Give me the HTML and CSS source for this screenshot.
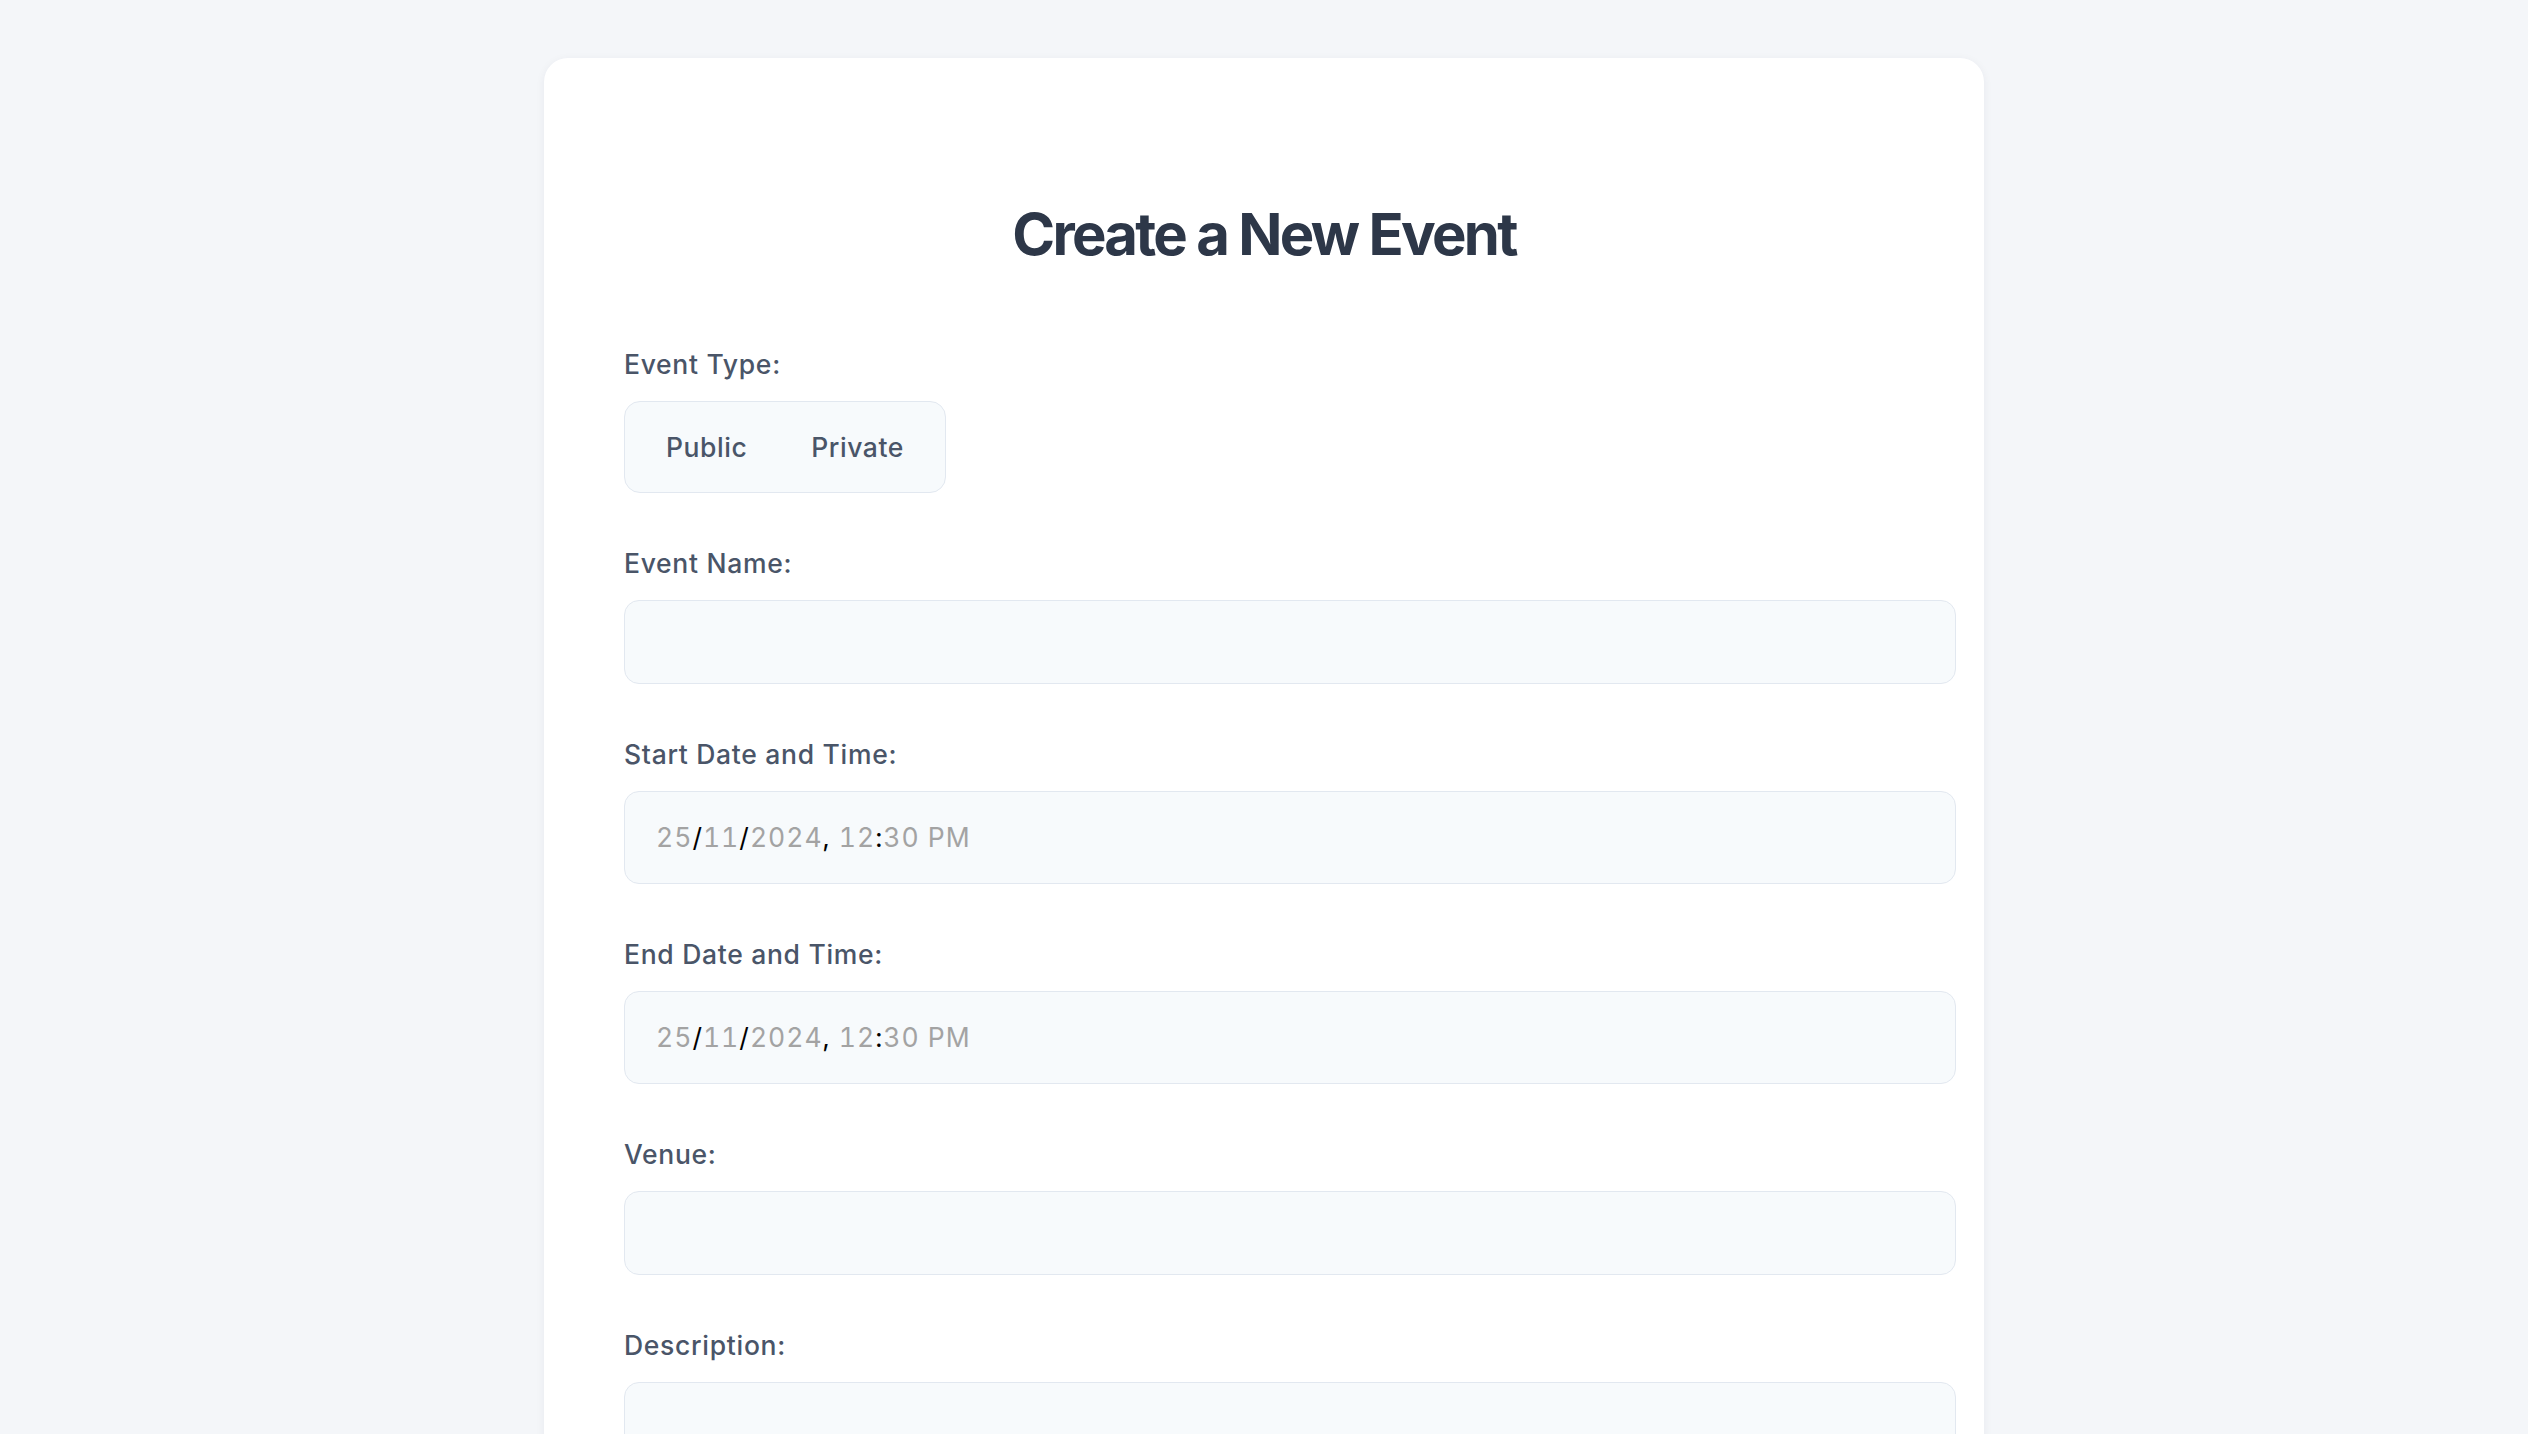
FILE: index.html
```html
<!DOCTYPE html>
<html lang="en">
<head>
<meta charset="utf-8">
<title>Create a New Event</title>
<link rel="stylesheet" href="styles.css">
</head>
<body>
<main class="card">
  <h1 class="title">Create a New Event</h1>
  <form class="form">
    <div class="group">
      <label class="label">Event Type:</label>
      <div class="segment">
        <button type="button" class="seg-btn">Public</button>
        <button type="button" class="seg-btn">Private</button>
      </div>
    </div>
    <div class="group">
      <label class="label" for="name">Event Name:</label>
      <input class="field" id="name" type="text">
    </div>
    <div class="group">
      <label class="label">Start Date and Time:</label>
      <div class="field date-field"><span class="date-text"><span class="ph">25</span>/<span class="ph">11</span>/<span class="ph">2024</span>, <span class="ph">12</span>:<span class="ph">30 PM</span></span></div>
    </div>
    <div class="group">
      <label class="label">End Date and Time:</label>
      <div class="field date-field"><span class="date-text"><span class="ph">25</span>/<span class="ph">11</span>/<span class="ph">2024</span>, <span class="ph">12</span>:<span class="ph">30 PM</span></span></div>
    </div>
    <div class="group">
      <label class="label" for="venue">Venue:</label>
      <input class="field" id="venue" type="text">
    </div>
    <div class="group">
      <label class="label" for="desc">Description:</label>
      <textarea class="field textarea" id="desc"></textarea>
    </div>
  </form>
</main>
</body>
</html>
```

FILE: styles.css
```css
html, body {
  margin: 0;
  padding: 0;
}
body {
  background: #f4f6f9;
  font-family: Inter, "Noto Sans", "Liberation Sans", sans-serif;
  padding-top: 58px;
  padding-bottom: 60px;
}
.card {
  width: 1280px;
  margin: 0 auto;
  padding: 80px;
  background: #ffffff;
  border-radius: 24px;
  box-shadow: 0 2px 10px rgba(30, 40, 70, 0.06);
}
.title {
  margin: 62px 0 75px;
  text-align: center;
  font-size: 58px;
  line-height: 1.2;
  font-weight: 700;
  letter-spacing: -2.7px;
  color: #2d3748;
}
.form {
  display: flex;
  flex-direction: column;
  gap: 51px;
}
.group {
  display: flex;
  flex-direction: column;
  align-items: flex-start;
}
.label {
  font-size: 26.5px;
  line-height: 39px;
  font-weight: 500;
  letter-spacing: 0.7px;
  color: #4a5568;
  margin-bottom: 17px;
}
.segment {
  display: flex;
  padding: 9px;
  background: #f7fafc;
  border: 1px solid #e2e8f0;
  border-radius: 16px;
}
.seg-btn {
  border: 0;
  background: transparent;
  font-family: inherit;
  font-size: 26.5px;
  line-height: 32px;
  font-weight: 500;
  letter-spacing: 0.55px;
  color: #4a5568;
  padding: 20px 32px;
  border-radius: 10px;
}
.field {
  display: block;
  width: 100%;
  box-sizing: content-box;
  padding: 25px;
  margin: 0;
  font-family: inherit;
  font-size: 26px;
  line-height: 32px;
  color: #2d3748;
  background: #f7fafc;
  border: 1px solid #e2e8f0;
  border-radius: 15px;
  outline: none;
}
.date-field {
  line-height: 41px;
}
.date-text {
  padding-left: 6px;
  color: #000000;
  font-size: 26.5px;
  font-variant-numeric: tabular-nums;
  letter-spacing: 1px;
}
.ph {
  color: #a3a3a3;
}
.textarea {
  height: 240px;
  resize: vertical;
}
```
